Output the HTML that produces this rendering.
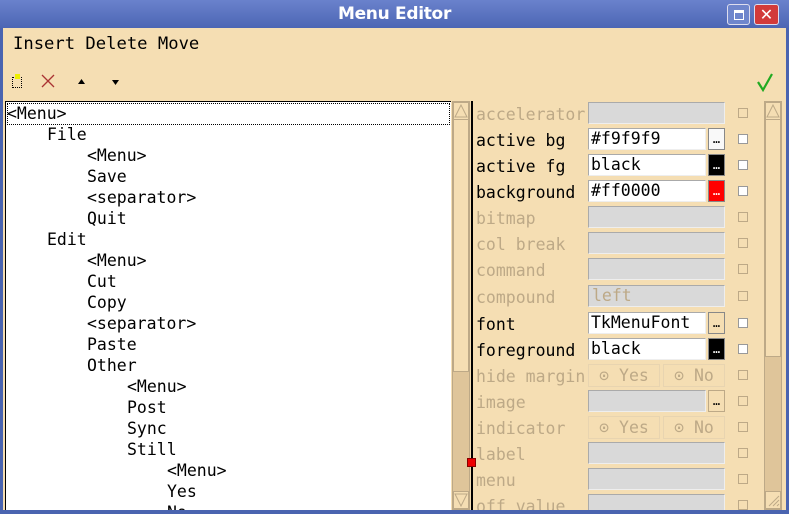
<!DOCTYPE html>
<html><head><meta charset="utf-8"><style>
*{margin:0;padding:0;box-sizing:border-box}
html,body{width:789px;height:514px;overflow:hidden}
body{background:#4a64b0;font-family:"DejaVu Sans Mono","Liberation Mono",monospace;font-size:16.5px;position:relative}
#wrap{position:absolute;left:0;top:0;width:789px;height:514px;overflow:hidden}
.a{position:absolute}
#title{left:0;top:0;width:789px;height:28px;background:linear-gradient(#6a82cc,#4c66b4);color:#fff;font:bold 17px "DejaVu Sans","Liberation Sans",sans-serif;text-align:center;line-height:28px;letter-spacing:-0.3px}
#body{left:3px;top:28px;width:783px;height:483px;background:#f5deb3}
.t{position:absolute;white-space:pre;line-height:21px}
.lbl{position:absolute;left:476px;line-height:26px;white-space:pre;margin-top:2px}
.dis{color:#bda987}
.en{position:absolute;left:588px;width:137px;height:22px;background:#d9d9d9;border:1px solid #aaa;border-right-color:#eee;border-bottom-color:#eee}
.w{background:#fff;line-height:20px;padding-left:2px;color:#000}
.btn{position:absolute;left:708px;width:17px;height:22px;border:1px solid #888;font-size:12px;line-height:20px;text-align:center}
.cb{position:absolute;left:738px;width:10px;height:10px;border:1px solid #bda987}
.cbw{background:#fff;border-color:#999}
.sb{position:absolute;width:18px;background:#dfc59a;border:1px solid #bda987}
.ar{position:absolute;left:0;width:16px;height:18px;background:#f5deb3;border:1px solid #bda987}
</style></head><body><div id="wrap">
<div class="a" id="title">Menu Editor</div>
<div class="a" style="left:727px;top:4px;width:23px;height:21px;background:#6f86cc;border:1px solid #dde;border-radius:3px"><div class="a" style="left:6px;top:5px;width:10px;height:10px;border:1px solid #fff;border-top-width:3px"></div></div>
<div class="a" style="left:754px;top:4px;width:25px;height:21px;background:#d23a3a;border:1px solid #dde;border-radius:3px;color:#fff;font:bold 16px 'DejaVu Sans',sans-serif;text-align:center;line-height:19px">✕</div>
<div class="a" id="body"></div>
<div class="t" style="left:13px;top:34px;font-size:17.2px">Insert Delete Move</div>
<div class="a" style="left:12px;top:77px;width:10px;height:11px;border:1px dotted #000"></div>
<div class="a" style="left:15px;top:74px;width:5px;height:5px;background:#ee0"></div>
<svg class="a" style="left:40px;top:73px" width="16" height="16"><path d="M2 2L14 14M14 2L2 14" stroke="#a33" stroke-width="1.3"/></svg>
<svg class="a" style="left:78px;top:79px" width="7" height="5"><path d="M0 5L3.5 0L7 5Z" fill="#000"/></svg>
<svg class="a" style="left:112px;top:80px" width="7" height="5"><path d="M0 0L3.5 5L7 0Z" fill="#000"/></svg>
<svg class="a" style="left:756px;top:72px" width="18" height="20"><path d="M2 10L7 18L16 2" stroke="#2a2" stroke-width="2.2" fill="none"/></svg>
<div class="a" style="left:5px;top:101px;width:446px;height:409px;background:#fff;border:1px solid #000;border-right:none;border-bottom:none;overflow:hidden">
<div class="a" style="left:1px;top:1px;width:443px;height:22px;border:1px dotted #000"></div>
<div class="t" style="left:1px;top:1px">&lt;Menu&gt;</div>
<div class="t" style="left:41px;top:22px">File</div>
<div class="t" style="left:81px;top:43px">&lt;Menu&gt;</div>
<div class="t" style="left:81px;top:64px">Save</div>
<div class="t" style="left:81px;top:85px">&lt;separator&gt;</div>
<div class="t" style="left:81px;top:106px">Quit</div>
<div class="t" style="left:41px;top:127px">Edit</div>
<div class="t" style="left:81px;top:148px">&lt;Menu&gt;</div>
<div class="t" style="left:81px;top:169px">Cut</div>
<div class="t" style="left:81px;top:190px">Copy</div>
<div class="t" style="left:81px;top:211px">&lt;separator&gt;</div>
<div class="t" style="left:81px;top:232px">Paste</div>
<div class="t" style="left:81px;top:253px">Other</div>
<div class="t" style="left:121px;top:274px">&lt;Menu&gt;</div>
<div class="t" style="left:121px;top:295px">Post</div>
<div class="t" style="left:121px;top:316px">Sync</div>
<div class="t" style="left:121px;top:337px">Still</div>
<div class="t" style="left:161px;top:358px">&lt;Menu&gt;</div>
<div class="t" style="left:161px;top:379px">Yes</div>
<div class="t" style="left:161px;top:400px">No</div>
</div>
<div class="sb" style="left:452px;top:101px;height:409px"><div class="a" style="left:0;top:0;width:16px;height:270px;background:#f5deb3;border:1px solid #bda987"></div><div class="ar" style="top:0"><svg width="14" height="16"><path d="M1 14L7 2L13 14Z" fill="none" stroke="#bda987"/></svg></div><div class="ar" style="top:389px"><svg width="14" height="16"><path d="M1 2L7 14L13 2Z" fill="none" stroke="#bda987"/></svg></div></div>
<div class="a" style="left:471px;top:101px;width:2px;height:409px;background:#000"></div>
<div class="a" style="left:467px;top:458px;width:9px;height:9px;background:#e00;border:1px solid #800"></div>
<div class="sb" style="left:764px;top:101px;height:409px"><div class="a" style="left:0;top:0;width:16px;height:255px;background:#f5deb3;border:1px solid #bda987"></div><div class="ar" style="top:0"><svg width="14" height="16"><path d="M1 14L7 2L13 14Z" fill="none" stroke="#bda987"/></svg></div><div class="ar" style="top:389px"><svg width="14" height="16"><path d="M3 14L13 4M7 14L13 8M11 14L13 12" stroke="#bda987"/></svg></div></div>

<div class="lbl dis" style="top:100px">accelerator</div><div class="en" style="top:102px"></div><div class="cb" style="top:108px"></div>
<div class="lbl" style="top:126px">active bg</div><div class="en w" style="top:128px;width:118px">#f9f9f9</div><div class="btn" style="top:128px;background:#f9f9f9">…</div><div class="cb cbw" style="top:134px"></div>
<div class="lbl" style="top:152px">active fg</div><div class="en w" style="top:154px;width:118px">black</div><div class="btn" style="top:154px;background:#000;color:#fff">…</div><div class="cb cbw" style="top:160px"></div>
<div class="lbl" style="top:178px">background</div><div class="en w" style="top:180px;width:118px">#ff0000</div><div class="btn" style="top:180px;background:#f00;color:#fff">…</div><div class="cb cbw" style="top:186px"></div>
<div class="lbl dis" style="top:204px">bitmap</div><div class="en" style="top:206px"></div><div class="cb" style="top:212px"></div>
<div class="lbl dis" style="top:230px">col break</div><div class="en" style="top:232px"></div><div class="cb" style="top:238px"></div>
<div class="lbl dis" style="top:256px">command</div><div class="en" style="top:258px"></div><div class="cb" style="top:264px"></div>
<div class="lbl dis" style="top:283px">compound</div><div class="en dis" style="top:285px;line-height:20px;padding-left:3px;color:#bda987">left</div><div class="cb" style="top:291px"></div>
<div class="lbl" style="top:310px">font</div><div class="en w" style="top:312px;width:118px">TkMenuFont</div><div class="btn" style="top:312px">…</div><div class="cb cbw" style="top:318px"></div>
<div class="lbl" style="top:336px">foreground</div><div class="en w" style="top:338px;width:118px">black</div><div class="btn" style="top:338px;background:#000;color:#fff">…</div><div class="cb cbw" style="top:344px"></div>
<div class="lbl dis" style="top:362px">hide margin</div><div class="a dis" style="left:588px;top:364px;width:72px;height:23px;border:1px solid #e8d4b0;line-height:21px;text-align:center">⊙ Yes</div><div class="a dis" style="left:663px;top:364px;width:62px;height:23px;border:1px solid #e8d4b0;line-height:21px;text-align:center">⊙ No</div><div class="cb" style="top:370px"></div>
<div class="lbl dis" style="top:388px">image</div><div class="en" style="top:390px;width:118px"></div><div class="btn" style="top:390px;border-color:#bda987">…</div><div class="cb" style="top:396px"></div>
<div class="lbl dis" style="top:414px">indicator</div><div class="a dis" style="left:588px;top:416px;width:72px;height:23px;border:1px solid #e8d4b0;line-height:21px;text-align:center">⊙ Yes</div><div class="a dis" style="left:663px;top:416px;width:62px;height:23px;border:1px solid #e8d4b0;line-height:21px;text-align:center">⊙ No</div><div class="cb" style="top:422px"></div>
<div class="lbl dis" style="top:440px">label</div><div class="en" style="top:442px"></div><div class="cb" style="top:448px"></div>
<div class="lbl dis" style="top:466px">menu</div><div class="en" style="top:468px"></div><div class="cb" style="top:474px"></div>
<div class="lbl dis" style="top:492px">off value</div><div class="en" style="top:494px"></div><div class="cb" style="top:500px"></div>
<div class="a" style="left:0;top:510px;width:789px;height:4px;background:#4a64b0"></div>
</div></body></html>
